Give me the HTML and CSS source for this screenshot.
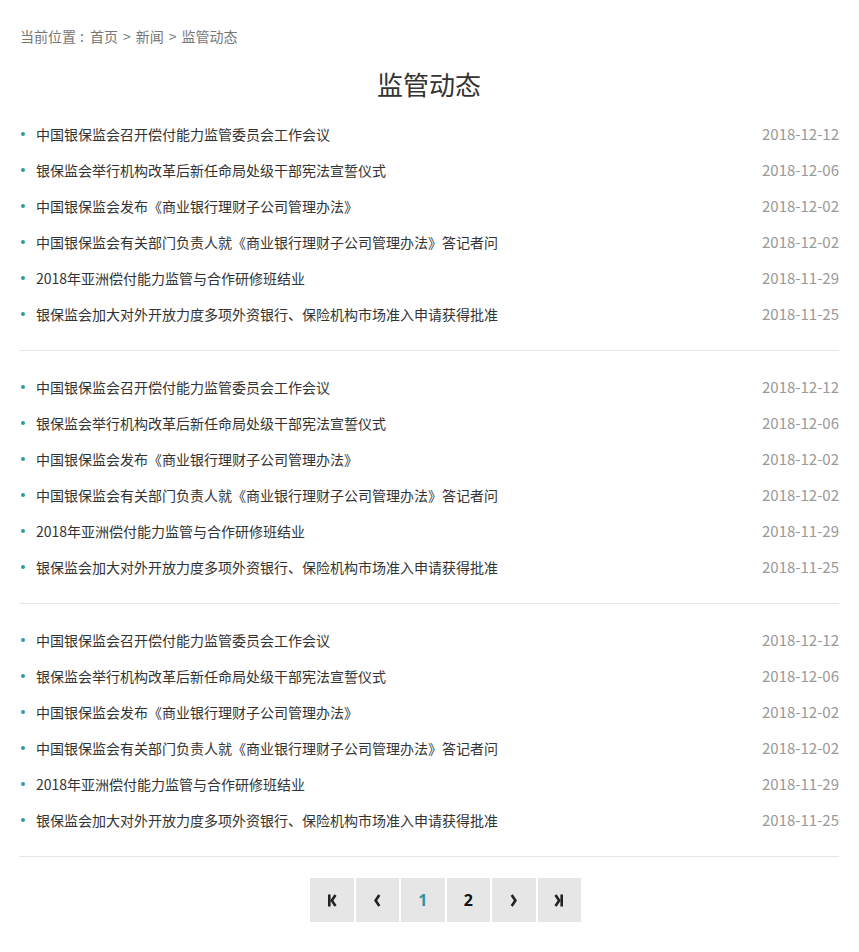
FILE: index.html
```html
<!DOCTYPE html>
<html lang="zh-CN">
<head>
<meta charset="utf-8">
<title>监管动态</title>
<link rel="stylesheet" href="styles.css">
</head>
<body>
<div class="page">
  <div class="crumb">当前位置<span class="colon">:</span><a>首页</a><span class="sep">&gt;</span><a>新闻</a><span class="sep">&gt;</span><a>监管动态</a></div>
  <h1 class="title">监管动态</h1>

  <ul class="group">
    <li class="row"><span class="txt">中国银保监会召开偿付能力监管委员会工作会议</span><span class="date">2018-12-12</span></li>
    <li class="row"><span class="txt">银保监会举行机构改革后新任命局处级干部宪法宣誓仪式</span><span class="date">2018-12-06</span></li>
    <li class="row"><span class="txt">中国银保监会发布《商业银行理财子公司管理办法》</span><span class="date">2018-12-02</span></li>
    <li class="row"><span class="txt">中国银保监会有关部门负责人就《商业银行理财子公司管理办法》答记者问</span><span class="date">2018-12-02</span></li>
    <li class="row"><span class="txt">2018年亚洲偿付能力监管与合作研修班结业</span><span class="date">2018-11-29</span></li>
    <li class="row"><span class="txt">银保监会加大对外开放力度多项外资银行、保险机构市场准入申请获得批准</span><span class="date">2018-11-25</span></li>
  </ul>
  <ul class="group">
    <li class="row"><span class="txt">中国银保监会召开偿付能力监管委员会工作会议</span><span class="date">2018-12-12</span></li>
    <li class="row"><span class="txt">银保监会举行机构改革后新任命局处级干部宪法宣誓仪式</span><span class="date">2018-12-06</span></li>
    <li class="row"><span class="txt">中国银保监会发布《商业银行理财子公司管理办法》</span><span class="date">2018-12-02</span></li>
    <li class="row"><span class="txt">中国银保监会有关部门负责人就《商业银行理财子公司管理办法》答记者问</span><span class="date">2018-12-02</span></li>
    <li class="row"><span class="txt">2018年亚洲偿付能力监管与合作研修班结业</span><span class="date">2018-11-29</span></li>
    <li class="row"><span class="txt">银保监会加大对外开放力度多项外资银行、保险机构市场准入申请获得批准</span><span class="date">2018-11-25</span></li>
  </ul>
  <ul class="group">
    <li class="row"><span class="txt">中国银保监会召开偿付能力监管委员会工作会议</span><span class="date">2018-12-12</span></li>
    <li class="row"><span class="txt">银保监会举行机构改革后新任命局处级干部宪法宣誓仪式</span><span class="date">2018-12-06</span></li>
    <li class="row"><span class="txt">中国银保监会发布《商业银行理财子公司管理办法》</span><span class="date">2018-12-02</span></li>
    <li class="row"><span class="txt">中国银保监会有关部门负责人就《商业银行理财子公司管理办法》答记者问</span><span class="date">2018-12-02</span></li>
    <li class="row"><span class="txt">2018年亚洲偿付能力监管与合作研修班结业</span><span class="date">2018-11-29</span></li>
    <li class="row"><span class="txt">银保监会加大对外开放力度多项外资银行、保险机构市场准入申请获得批准</span><span class="date">2018-11-25</span></li>
  </ul>

  <div class="pager">
    <a class="pbtn"><svg width="10" height="13" viewBox="0 0 10 13"><rect x="1" y="0.5" width="2.6" height="12" fill="#222"/><path d="M8.5 1 L4.8 6.5 L8.5 12" fill="none" stroke="#222" stroke-width="2.6"/></svg></a>
    <a class="pbtn"><svg width="8" height="13" viewBox="0 0 8 13"><path d="M6.3 1 L2.6 6.5 L6.3 12" fill="none" stroke="#222" stroke-width="2.6"/></svg></a>
    <a class="pbtn num cur">1</a>
    <a class="pbtn num">2</a>
    <a class="pbtn"><svg width="8" height="13" viewBox="0 0 8 13"><path d="M1.7 1 L5.4 6.5 L1.7 12" fill="none" stroke="#222" stroke-width="2.6"/></svg></a>
    <a class="pbtn"><svg width="10" height="13" viewBox="0 0 10 13"><path d="M1.5 1 L5.2 6.5 L1.5 12" fill="none" stroke="#222" stroke-width="2.6"/><rect x="6.4" y="0.5" width="2.6" height="12" fill="#222"/></svg></a>
  </div>
</div>
</body>
</html>
```

FILE: styles.css
```css
* { box-sizing: border-box; }
html, body {
  margin: 0;
  padding: 0;
  background: #fff;
}
body {
  font-family: "Noto Sans CJK SC", "Noto Sans", "Liberation Sans", sans-serif;
  color: #333;
}
.page {
  padding: 26px 20px 30px 19px;
}
.crumb {
  font-size: 14px;
  line-height: 20px;
  color: #777;
  padding-left: 1px;
}
.crumb a { color: #777; }
.colon { margin: 0 6px 0 4px; }
.sep { margin: 0 5px; }
.title {
  margin: 24px 0 0;
  font-size: 26px;
  line-height: 28px;
  font-weight: 400;
  text-align: center;
  color: #333;
}
.group {
  list-style: none;
  margin: 0;
  padding: 18px 0 18px;
  border-bottom: 1px solid #e6e6e6;
}
.row {
  display: flex;
  justify-content: space-between;
  align-items: center;
  height: 36px;
  font-size: 14px;
  line-height: 36px;
}
.txt {
  position: relative;
  padding-left: 17px;
  color: #333;
}
.txt::before {
  content: "";
  position: absolute;
  left: 2px;
  top: 50%;
  width: 4px;
  height: 4px;
  margin-top: -2px;
  border-radius: 50%;
  background: #2e9aa1;
}
.date {
  font-size: 15px;
  color: #999;
}
.pager {
  display: flex;
  gap: 2px;
  margin-top: 21px;
  padding-left: 291px;
}
.pbtn {
  display: flex;
  align-items: center;
  justify-content: center;
  width: 43.5px;
  height: 44px;
  background: #e6e6e6;
}
.num {
  font-size: 16px;
  font-weight: 700;
  color: #111;
  font-family: "Open Sans", "Noto Sans", sans-serif;
}
.cur { color: #2e959c; }
```
